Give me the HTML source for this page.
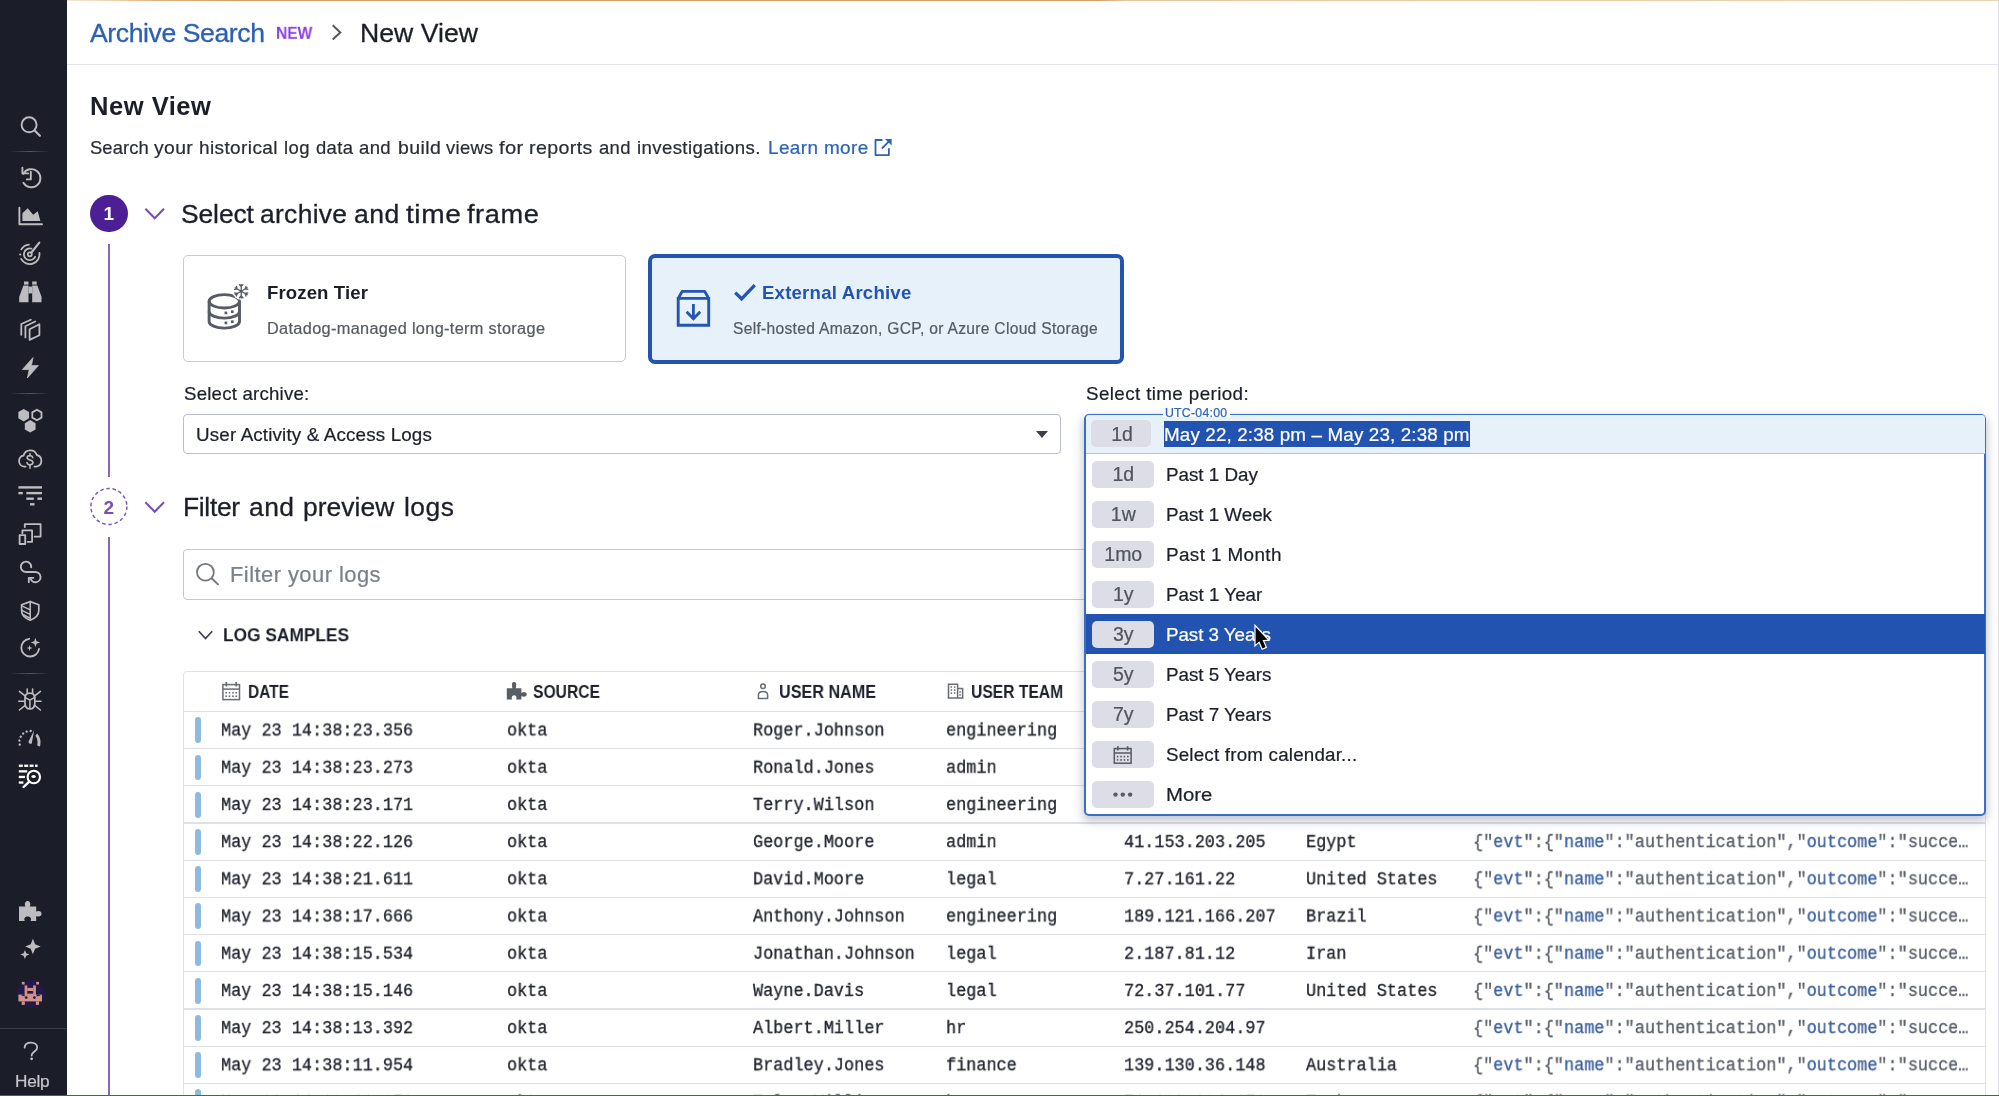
<!DOCTYPE html>
<html><head><meta charset="utf-8"><title>Archive Search</title>
<style>
html,body{margin:0;padding:0;width:1999px;height:1096px;overflow:hidden}
body{width:1999px;height:1096px;position:relative;overflow:hidden;background:#fff;font-family:"Liberation Sans",sans-serif}
.t{position:absolute;white-space:nowrap;margin:0;padding:0;will-change:transform}
.a{position:absolute}
#side{left:0;top:0;width:67px;height:1096px;background:#1b1d29}
#hdrline{left:67px;top:64px;width:1932px;height:1.4px;background:#e1e4ee}
#topline{left:67px;top:0;width:1932px;height:1.2px;background:linear-gradient(90deg,#f3e6d2 0,#f0dcc0 30px,#dfb17c 90px,#d8a163 170px,#d8a163 1030px,#e6c9a3 1060px,#ead2b2 100%)}
#botline{left:0;top:1094.6px;width:1999px;height:1.4px;background:#3d6e44}
#circ1{left:90px;top:194.5px;width:37.5px;height:37.5px;border-radius:50%;background:#4c1f95}
#circ2{display:none}
.vl{position:absolute;left:108.1px;width:2.2px;background:#8768b5}
#card1{left:183px;top:255px;width:440.6px;height:105px;border:1.2px solid #c6cadb;border-radius:5px;background:#fff}
#card2{left:648px;top:254px;width:468px;height:102px;border:4px solid #2354b0;border-radius:7px;background:#e7f1fa}
#sel{left:183px;top:414px;width:876px;height:38px;border:1.2px solid #babecf;border-radius:4px;background:#fff}
#caret{left:1036px;top:431px;width:0;height:0;border-left:6.5px solid transparent;border-right:6.5px solid transparent;border-top:7.5px solid #3c3f48}
#filt{left:183px;top:548.5px;width:1100px;height:49px;border:1.3px solid #c3c7d8;border-radius:4px;background:#fff}
#tbl{left:183.3px;top:671px;width:1801px;height:500px;border:1.3px solid #dfe2ec;border-radius:4px;background:#fff}
#thl{left:184px;top:710.6px;width:1801px;height:1.4px;background:#dfe2ec}
.bar{position:absolute;left:194.5px;width:6.9px;height:25.9px;border-radius:3.45px;background:#8ebbdd}
.rl{position:absolute;left:184px;width:1801px;height:1.3px;background:#dde0ea}
#dd{left:1084px;top:414px;width:898px;height:398px;border:2px solid #3a6fc9;border-radius:5px;background:#fff;box-shadow:0 4px 10px 1px rgba(35,40,65,.27)}
#ddtop{left:1086px;top:415px;width:899px;height:38px;background:#e7f1fa;border-bottom:1.2px solid #b7c4dd;border-radius:3px 3px 0 0}
#ddselbg{left:1163.7px;top:421.3px;width:306px;height:25.4px;background:#2353b0}
#ddhl{left:1086px;top:613.8px;width:899px;height:40.2px;background:#2353b0}
.tag{position:absolute;left:1091.5px;width:62.5px;height:27px;border-radius:5px;background:#dcdde7}
#tag0{}
#utcbg{left:1162.5px;top:411px;width:67.5px;height:6px;background:#fff}
#rstrip{left:1997.6px;top:1.3px;width:1.4px;height:1094px;background:#dedfe4}
b{font-weight:400;color:#2b62b8}
.p{color:#565b66}
#helpline{left:0;top:1027.6px;width:67px;height:1.2px;background:#3a3d4b}
.sd{position:absolute;left:10px;width:40px;height:1.4px;background:linear-gradient(90deg,rgba(90,92,105,0),rgba(90,92,105,.9) 50%,rgba(90,92,105,0))}
svg{position:absolute;overflow:visible}
</style></head><body>
<div id="root" style="position:absolute;left:0;top:0;width:1999px;height:1096px;overflow:hidden">
<div class="a" id="side"></div>
<div class="a" id="topline"></div>
<div class="a" id="hdrline"></div>
<div class="a" id="rstrip"></div>
<div class="vl" style="top:243.5px;height:233px"></div>
<div class="vl" style="top:537px;height:560px"></div>
<div class="a" id="circ1"></div>
<div class="a" id="circ2"></div>
<div class="a" id="card1"></div>
<div class="a" id="card2"></div>
<div class="a" id="sel"></div><div class="a" id="caret"></div>
<div class="a" id="filt"></div>
<div class="a" id="tbl"></div><div class="a" id="thl"></div>
<div class="bar" style="top:717.4px"></div>
<div class="rl" style="top:748.0px"></div>
<div class="bar" style="top:754.6px"></div>
<div class="rl" style="top:785.2px"></div>
<div class="bar" style="top:791.8px"></div>
<div class="rl" style="top:822.4px"></div>
<div class="bar" style="top:829.0px"></div>
<div class="rl" style="top:859.6px"></div>
<div class="bar" style="top:866.2px"></div>
<div class="rl" style="top:896.8px"></div>
<div class="bar" style="top:903.4px"></div>
<div class="rl" style="top:934.0px"></div>
<div class="bar" style="top:940.6px"></div>
<div class="rl" style="top:971.2px"></div>
<div class="bar" style="top:977.8px"></div>
<div class="rl" style="top:1008.4px"></div>
<div class="bar" style="top:1015.0px"></div>
<div class="rl" style="top:1045.6px"></div>
<div class="bar" style="top:1052.2px"></div>
<div class="rl" style="top:1082.8px"></div>
<div class="bar" style="top:1089.4px"></div>
<div class="rl" style="top:1120.0px"></div>
<svg style="left:328px;top:22px" width="16" height="22" viewBox="328 22 16 22"><path d="M332.7 25.3L340.3 32.4L332.7 39.5" fill="none" stroke="#565961" stroke-width="2" stroke-linejoin="miter"/></svg>
<svg style="left:872px;top:136px" width="22" height="22" viewBox="872 136 22 22"><path d="M882.4 140H875.5V155.1H888.9V148.2" fill="none" stroke="#2c62b9" stroke-width="1.8" stroke-linejoin="round"/><path d="M881.9 148.5L890 140.4" fill="none" stroke="#2c62b9" stroke-width="1.8"/><path d="M885 139H891.6V145.6Z" fill="#2c62b9"/></svg>
<svg style="left:142px;top:204px" width="26" height="18" viewBox="142 204 26 18"><path d="M145.4 208.8L154.7 218.2L164 208.8" fill="none" stroke="#7a4db6" stroke-width="2.1"/></svg>
<svg style="left:142px;top:498px" width="26" height="18" viewBox="142 498 26 18"><path d="M145.4 502.3L154.7 511.7L164 502.3" fill="none" stroke="#7a4db6" stroke-width="2.1"/></svg>
<svg style="left:196px;top:628px" width="20" height="14" viewBox="196 628 20 14"><path d="M198.8 631.2L205.5 638.5L212.2 631.2" fill="none" stroke="#3c3f49" stroke-width="1.7"/></svg>
<svg style="left:204px;top:280px" width="48" height="54" viewBox="204 280 48 54"><ellipse cx="224.3" cy="301.3" rx="15.2" ry="6.7" fill="none" stroke="#575b62" stroke-width="2.9"/><path d="M209.10000000000002 301.3V321.4A15.2 6.7 0 0 0 239.5 321.4V301.3" fill="none" stroke="#575b62" stroke-width="2.9"/><path d="M209.10000000000002 311.4A15.2 6.7 0 0 0 239.5 311.4" fill="none" stroke="#575b62" stroke-width="2.9"/><rect x="224.55" y="311.54999999999995" width="2.7" height="2.7" fill="#575b62"/><rect x="230.95000000000002" y="310.34999999999997" width="2.7" height="2.7" fill="#575b62"/><rect x="224.55" y="321.54999999999995" width="2.7" height="2.7" fill="#575b62"/><rect x="230.95000000000002" y="320.34999999999997" width="2.7" height="2.7" fill="#575b62"/><circle cx="241.2" cy="291.2" r="8.6" fill="#fff"/><path d="M241.20 291.20L241.20 284.30M241.20 286.60L239.46 284.67M241.20 286.60L242.94 284.67M241.20 291.20L247.18 287.75M245.18 288.90L245.99 286.43M245.18 288.90L247.73 289.44M241.20 291.20L247.18 294.65M245.18 293.50L247.73 292.96M245.18 293.50L245.99 295.97M241.20 291.20L241.20 298.10M241.20 295.80L242.94 297.73M241.20 295.80L239.46 297.73M241.20 291.20L235.22 294.65M237.22 293.50L236.41 295.97M237.22 293.50L234.67 292.96M241.20 291.20L235.22 287.75M237.22 288.90L234.67 289.44M237.22 288.90L236.41 286.43" fill="none" stroke="#575b62" stroke-width="1.3" stroke-linecap="round"/></svg>
<svg style="left:674px;top:286px" width="40" height="44" viewBox="674 286 40 44"><path d="M678.2 298.4L682.2 291.4H704.7L708.7 298.4" fill="none" stroke="#2356b0" stroke-width="2.9" stroke-linejoin="round"/><path d="M678.2 298.4H708.7V325.2H678.2Z" fill="none" stroke="#2356b0" stroke-width="2.9" stroke-linejoin="miter"/><path d="M693.4 304V318.4M686.6 311.8L693.4 318.8L700.2 311.8" fill="none" stroke="#2356b0" stroke-width="2.8"/></svg>
<svg style="left:731px;top:281px" width="28" height="24" viewBox="731 281 28 24"><path d="M735.2 292.6L741.6 298.8L754.8 285.2" fill="none" stroke="#2356b0" stroke-width="3.3" stroke-linejoin="miter"/></svg>
<svg style="left:194px;top:560px" width="28" height="28" viewBox="194 560 28 28"><circle cx="205.4" cy="572.2" r="8.4" fill="none" stroke="#747880" stroke-width="1.8"/><path d="M211.6 578.2L218 584.4" fill="none" stroke="#747880" stroke-width="2" stroke-linecap="round"/></svg>
<svg style="left:220px;top:680px" width="24" height="24" viewBox="220 680 24 24"><rect x="222.9" y="684.6" width="16.6" height="15" fill="none" stroke="#686c74" stroke-width="1.5"/><path d="M222.9 689.1H239.5" stroke="#686c74" stroke-width="1.5"/><path d="M226.3 682V686.6M236.2 682V686.6" stroke="#686c74" stroke-width="1.7"/><rect x="225.39999999999998" y="692.0" width="1.6" height="1.6" fill="#686c74"/><rect x="228.7" y="692.0" width="1.6" height="1.6" fill="#686c74"/><rect x="232.1" y="692.0" width="1.6" height="1.6" fill="#686c74"/><rect x="235.5" y="692.0" width="1.6" height="1.6" fill="#686c74"/><rect x="225.39999999999998" y="695.4000000000001" width="1.6" height="1.6" fill="#686c74"/><rect x="228.7" y="695.4000000000001" width="1.6" height="1.6" fill="#686c74"/><rect x="232.1" y="695.4000000000001" width="1.6" height="1.6" fill="#686c74"/><rect x="235.5" y="695.4000000000001" width="1.6" height="1.6" fill="#686c74"/></svg>
<svg style="left:504px;top:680px" width="26" height="24" viewBox="504 680 26 24"><path d="M506.8 688.2H512.6C511.4 686.4 512.2 682.2 514.1 682.2C516 682.2 516.8 686.4 515.6 688.2H521.4V692.9C523.2 691.7 526.6 692.4 526.6 694.4C526.6 696.4 523.2 697.1 521.4 695.9V699.6H516C517.2 697.6 516 695.3 514.1 695.3C512.2 695.3 511 697.6 512.2 699.6H506.8Z" fill="#595d64"/><circle cx="514.1" cy="684.2" r="2.1" fill="#595d64"/><circle cx="524.5" cy="694.4" r="2.1" fill="#595d64"/></svg>
<svg style="left:756px;top:682px" width="14" height="20" viewBox="756 682 14 20"><circle cx="763" cy="686.2" r="2.3" fill="none" stroke="#686c74" stroke-width="1.5"/><path d="M758.4 698.6V695.2C758.4 692.8 760 691.6 763 691.6C766 691.6 767.6 692.8 767.6 695.2V698.6Z" fill="none" stroke="#686c74" stroke-width="1.5" stroke-linejoin="round"/></svg>
<svg style="left:946px;top:682px" width="20" height="18" viewBox="946 682 20 18"><path d="M948.5 698V684.2H957.6V698M957.6 688.6H962.6V698M947.6 698H963.6" fill="none" stroke="#686c74" stroke-width="1.5"/><rect x="950.5999999999999" y="686.3" width="1.5" height="1.5" fill="#686c74"/><rect x="953.9" y="686.3" width="1.5" height="1.5" fill="#686c74"/><rect x="950.5999999999999" y="689.3" width="1.5" height="1.5" fill="#686c74"/><rect x="953.9" y="689.3" width="1.5" height="1.5" fill="#686c74"/><rect x="950.5999999999999" y="692.3" width="1.5" height="1.5" fill="#686c74"/><rect x="953.9" y="692.3" width="1.5" height="1.5" fill="#686c74"/><rect x="959.3" y="691.3" width="1.5" height="1.5" fill="#686c74"/><rect x="959.3" y="694.3" width="1.5" height="1.5" fill="#686c74"/></svg>
<svg style="left:88px;top:486px" width="42" height="42" viewBox="88 486 42 42"><circle cx="108.9" cy="506.5" r="18" fill="#fff" stroke="#7f5db6" stroke-width="1.5" stroke-dasharray="3.6 2.68"/></svg>
<div class="a" id="dd"></div>
<div class="a" id="ddtop"></div>
<div class="a" id="ddselbg"></div>
<div class="a" id="ddhl"></div>
<div class="tag" style="top:420px;left:1091px;width:60px;height:27px"></div>
<div class="tag" style="top:461px"></div>
<div class="tag" style="top:501px"></div>
<div class="tag" style="top:541px"></div>
<div class="tag" style="top:581px"></div>
<div class="tag" style="top:621px"></div>
<div class="tag" style="top:661px"></div>
<div class="tag" style="top:701px"></div>
<div class="tag" style="top:741px"></div>
<div class="tag" style="top:781px"></div>
<div class="a" id="utcbg"></div>
<svg style="left:1111px;top:744px" width="24" height="22" viewBox="1111 744 24 22"><rect x="1114.3" y="748.6" width="16.8" height="14.6" fill="none" stroke="#575b63" stroke-width="1.5"/><path d="M1114.3 753H1131.1" stroke="#575b63" stroke-width="1.5"/><path d="M1117.8 746.2V750.6M1127.6 746.2V750.6" stroke="#575b63" stroke-width="1.7"/><rect x="1116.8" y="755.8000000000001" width="1.6" height="1.6" fill="#575b63"/><rect x="1120.2" y="755.8000000000001" width="1.6" height="1.6" fill="#575b63"/><rect x="1123.6000000000001" y="755.8000000000001" width="1.6" height="1.6" fill="#575b63"/><rect x="1127.0" y="755.8000000000001" width="1.6" height="1.6" fill="#575b63"/><rect x="1116.8" y="759.1" width="1.6" height="1.6" fill="#575b63"/><rect x="1120.2" y="759.1" width="1.6" height="1.6" fill="#575b63"/><rect x="1123.6000000000001" y="759.1" width="1.6" height="1.6" fill="#575b63"/><rect x="1127.0" y="759.1" width="1.6" height="1.6" fill="#575b63"/></svg>
<svg style="left:1110px;top:790px" width="26" height="10" viewBox="1110 790 26 10"><circle cx="1115.5" cy="794.6" r="2.2" fill="#575b63"/><circle cx="1122.8" cy="794.6" r="2.2" fill="#575b63"/><circle cx="1130.1" cy="794.6" r="2.2" fill="#575b63"/></svg>
<div id="help" class="t" style="left:14.5px;top:1070px;font:400 17.2px/22px 'Liberation Sans', sans-serif;color:#c4c5cc;letter-spacing:-0.225px;-webkit-text-stroke:0.22px #c4c5cc;transform:translateY(0.10px);transform-origin:0 0;">Help</div>
<div id="h_as" class="t" style="left:89.5px;top:16px;font:400 26.6px/35px 'Liberation Sans', sans-serif;color:#2c60b6;letter-spacing:-0.414px;-webkit-text-stroke:0.3px #2c60b6;">Archive Search</div>
<div id="h_new" class="t" style="left:275.6px;top:22px;font:700 16.3px/21px 'Liberation Sans', sans-serif;color:#8a40de;letter-spacing:0.000px;transform:translateY(0.80px) scaleX(0.9579);transform-origin:0 0;">NEW</div>
<div id="h_nv" class="t" style="left:360px;top:16px;font:400 26.6px/35px 'Liberation Sans', sans-serif;color:#1c1f2a;letter-spacing:0.025px;-webkit-text-stroke:0.3px #1c1f2a;">New View</div>
<div id="t_nv" class="t" style="left:90px;top:90px;font:700 25.4px/33px 'Liberation Sans', sans-serif;color:#1c1f2a;letter-spacing:0.508px;transform:translateY(0.20px) scaleX(1.0061);transform-origin:0 0;">New View</div>
<div id="t_desc_0" class="t" style="left:90.27px;top:136px;font:400 18.4px/24px 'Liberation Sans', sans-serif;color:#2a2d37;letter-spacing:0.077px;-webkit-text-stroke:0.22px #2a2d37;transform:translateY(0.20px);transform-origin:0 0;">Search</div>
<div id="t_desc_1" class="t" style="left:154.07px;top:136px;font:400 18.4px/24px 'Liberation Sans', sans-serif;color:#2a2d37;letter-spacing:0.368px;-webkit-text-stroke:0.22px #2a2d37;transform:translateY(0.20px) scaleX(1.0508);transform-origin:0 0;">your</div>
<div id="t_desc_2" class="t" style="left:199.47px;top:136px;font:400 18.4px/24px 'Liberation Sans', sans-serif;color:#2a2d37;letter-spacing:0.368px;-webkit-text-stroke:0.22px #2a2d37;transform:translateY(0.20px) scaleX(1.0339);transform-origin:0 0;">historical</div>
<div id="t_desc_3" class="t" style="left:283.87px;top:136px;font:400 18.4px/24px 'Liberation Sans', sans-serif;color:#2a2d37;letter-spacing:0.368px;-webkit-text-stroke:0.22px #2a2d37;transform:translateY(0.20px) scaleX(1.0061);transform-origin:0 0;">log</div>
<div id="t_desc_4" class="t" style="left:315.67px;top:136px;font:400 18.4px/24px 'Liberation Sans', sans-serif;color:#2a2d37;letter-spacing:0.368px;-webkit-text-stroke:0.22px #2a2d37;transform:translateY(0.20px) scaleX(1.0024);transform-origin:0 0;">data</div>
<div id="t_desc_5" class="t" style="left:359.37px;top:136px;font:400 18.4px/24px 'Liberation Sans', sans-serif;color:#2a2d37;letter-spacing:0.368px;-webkit-text-stroke:0.22px #2a2d37;transform:translateY(0.20px) scaleX(1.0081);transform-origin:0 0;">and</div>
<div id="t_desc_6" class="t" style="left:397.97px;top:136px;font:400 18.4px/24px 'Liberation Sans', sans-serif;color:#2a2d37;letter-spacing:0.368px;-webkit-text-stroke:0.22px #2a2d37;transform:translateY(0.20px) scaleX(1.0595);transform-origin:0 0;">build</div>
<div id="t_desc_7" class="t" style="left:446.17px;top:136px;font:400 18.4px/24px 'Liberation Sans', sans-serif;color:#2a2d37;letter-spacing:0.312px;-webkit-text-stroke:0.22px #2a2d37;transform:translateY(0.20px);transform-origin:0 0;">views</div>
<div id="t_desc_8" class="t" style="left:498.87px;top:136px;font:400 18.4px/24px 'Liberation Sans', sans-serif;color:#2a2d37;letter-spacing:0.368px;-webkit-text-stroke:0.22px #2a2d37;transform:translateY(0.20px) scaleX(1.0958);transform-origin:0 0;">for</div>
<div id="t_desc_9" class="t" style="left:529.47px;top:136px;font:400 18.4px/24px 'Liberation Sans', sans-serif;color:#2a2d37;letter-spacing:0.368px;-webkit-text-stroke:0.22px #2a2d37;transform:translateY(0.20px) scaleX(1.0666);transform-origin:0 0;">reports</div>
<div id="t_desc_10" class="t" style="left:598.77px;top:136px;font:400 18.4px/24px 'Liberation Sans', sans-serif;color:#2a2d37;letter-spacing:0.368px;-webkit-text-stroke:0.22px #2a2d37;transform:translateY(0.20px) scaleX(1.0018);transform-origin:0 0;">and</div>
<div id="t_desc_11" class="t" style="left:637.17px;top:136px;font:400 18.4px/24px 'Liberation Sans', sans-serif;color:#2a2d37;letter-spacing:0.368px;-webkit-text-stroke:0.22px #2a2d37;transform:translateY(0.20px) scaleX(1.0134);transform-origin:0 0;">investigations.</div>
<div id="t_lm" class="t" style="left:768px;top:136px;font:400 18.4px/24px 'Liberation Sans', sans-serif;color:#2d64bb;letter-spacing:0.368px;-webkit-text-stroke:0.22px #2d64bb;transform:translateY(0.20px) scaleX(1.0289);transform-origin:0 0;">Learn more</div>
<div id="s1_n" class="t" style="left:0px;font:700 19px/25px 'Liberation Sans', sans-serif;color:#fff;letter-spacing:0.000px;left:90px;width:37.5px;text-align:center;top:201px;">1</div>
<div id="s1_h_0" class="t" style="left:181.31px;top:197px;font:400 26.4px/34px 'Liberation Sans', sans-serif;color:#1c1f2a;letter-spacing:-0.087px;-webkit-text-stroke:0.3px #1c1f2a;transform:translateY(0.20px);transform-origin:0 0;">Select</div>
<div id="s1_h_1" class="t" style="left:259.81px;top:197px;font:400 26.4px/34px 'Liberation Sans', sans-serif;color:#1c1f2a;letter-spacing:0.326px;-webkit-text-stroke:0.3px #1c1f2a;transform:translateY(0.20px);transform-origin:0 0;">archive</div>
<div id="s1_h_2" class="t" style="left:353.81px;top:197px;font:400 26.4px/34px 'Liberation Sans', sans-serif;color:#1c1f2a;letter-spacing:0.528px;-webkit-text-stroke:0.3px #1c1f2a;transform:translateY(0.20px) scaleX(1.0065);transform-origin:0 0;">and</div>
<div id="s1_h_3" class="t" style="left:405.81px;top:197px;font:400 26.4px/34px 'Liberation Sans', sans-serif;color:#1c1f2a;letter-spacing:0.528px;-webkit-text-stroke:0.3px #1c1f2a;transform:translateY(0.20px) scaleX(1.0648);transform-origin:0 0;">time</div>
<div id="s1_h_4" class="t" style="left:467.31px;top:197px;font:400 26.4px/34px 'Liberation Sans', sans-serif;color:#1c1f2a;letter-spacing:0.528px;-webkit-text-stroke:0.3px #1c1f2a;transform:translateY(0.20px) scaleX(1.0319);transform-origin:0 0;">frame</div>
<div id="c1_t" class="t" style="left:267px;top:281px;font:700 18.6px/24px 'Liberation Sans', sans-serif;color:#1c1f2a;letter-spacing:0.100px;transform:translateY(0.10px);transform-origin:0 0;">Frozen Tier</div>
<div id="c1_s" class="t" style="left:266.5px;top:318px;font:400 15.6px/20px 'Liberation Sans', sans-serif;color:#565b63;letter-spacing:0.312px;-webkit-text-stroke:0.22px #565b63;transform:translateY(0.90px) scaleX(1.0463);transform-origin:0 0;">Datadog-managed long-term storage</div>
<div id="c2_t" class="t" style="left:761.5px;top:281px;font:700 18.6px/24px 'Liberation Sans', sans-serif;color:#2353b0;letter-spacing:0.212px;transform:translateY(0.10px);transform-origin:0 0;">External Archive</div>
<div id="c2_s" class="t" style="left:733px;top:318px;font:400 15.6px/20px 'Liberation Sans', sans-serif;color:#565b63;letter-spacing:0.302px;-webkit-text-stroke:0.22px #565b63;transform:translateY(0.90px);transform-origin:0 0;">Self-hosted Amazon, GCP, or Azure Cloud Storage</div>
<div id="l_sa" class="t" style="left:183.5px;top:382px;font:400 18.6px/24px 'Liberation Sans', sans-serif;color:#1c1f2a;letter-spacing:0.233px;-webkit-text-stroke:0.22px #1c1f2a;transform:translateY(0.10px);transform-origin:0 0;">Select archive:</div>
<div id="v_sa" class="t" style="left:195.5px;top:423px;font:400 18.8px/24px 'Liberation Sans', sans-serif;color:#1c1f2a;letter-spacing:0.159px;-webkit-text-stroke:0.22px #1c1f2a;transform:translateY(0.10px);transform-origin:0 0;">User Activity &amp; Access Logs</div>
<div id="l_tp" class="t" style="left:1085.5px;top:382px;font:400 18.6px/24px 'Liberation Sans', sans-serif;color:#1c1f2a;letter-spacing:0.372px;-webkit-text-stroke:0.22px #1c1f2a;transform:translateY(0.10px) scaleX(1.0120);transform-origin:0 0;">Select time period:</div>
<div id="utc" class="t" style="left:1165px;top:404px;font:400 12.2px/16px 'Liberation Sans', sans-serif;color:#2d64bb;letter-spacing:0.244px;-webkit-text-stroke:0.22px #2d64bb;transform:translateY(0.50px) scaleX(1.0082);transform-origin:0 0;">UTC-04:00</div>
<div id="s2_n" class="t" style="left:0px;font:700 19px/25px 'Liberation Sans', sans-serif;color:#7851b2;letter-spacing:0.000px;left:90.2px;width:37.5px;text-align:center;top:494.5px;">2</div>
<div id="s2_h_0" class="t" style="left:183.11px;top:490px;font:400 26.4px/34px 'Liberation Sans', sans-serif;color:#1c1f2a;letter-spacing:-0.320px;-webkit-text-stroke:0.3px #1c1f2a;transform:translateY(0.30px);transform-origin:0 0;">Filter</div>
<div id="s2_h_1" class="t" style="left:249.41px;top:490px;font:400 26.4px/34px 'Liberation Sans', sans-serif;color:#1c1f2a;letter-spacing:0.493px;-webkit-text-stroke:0.3px #1c1f2a;transform:translateY(0.30px);transform-origin:0 0;">and</div>
<div id="s2_h_2" class="t" style="left:303.11px;top:490px;font:400 26.4px/34px 'Liberation Sans', sans-serif;color:#1c1f2a;letter-spacing:0.069px;-webkit-text-stroke:0.3px #1c1f2a;transform:translateY(0.30px);transform-origin:0 0;">preview</div>
<div id="s2_h_3" class="t" style="left:403.71px;top:490px;font:400 26.4px/34px 'Liberation Sans', sans-serif;color:#1c1f2a;letter-spacing:0.495px;-webkit-text-stroke:0.3px #1c1f2a;transform:translateY(0.30px);transform-origin:0 0;">logs</div>
<div id="ph" class="t" style="left:229.5px;top:561px;font:400 21.4px/28px 'Liberation Sans', sans-serif;color:#7b8089;letter-spacing:0.428px;-webkit-text-stroke:0.22px #7b8089;transform:translateY(0.30px) scaleX(1.0262);transform-origin:0 0;">Filter your logs</div>
<div id="logs" class="t" style="left:222.5px;top:622px;font:700 18.9px/25px 'Liberation Sans', sans-serif;color:#1c1f2a;letter-spacing:0.000px;transform:translateY(0.20px) scaleX(0.9164);transform-origin:0 0;">LOG SAMPLES</div>
<div id="dd_sel" class="t" style="left:1164.3px;top:423px;font:400 18.8px/24px 'Liberation Sans', sans-serif;color:#fff;letter-spacing:0.152px;-webkit-text-stroke:0.22px #fff;transform:translateY(0.10px);transform-origin:0 0;">May 22, 2:38 pm – May 23, 2:38 pm</div>
<div id="tag0" class="t" style="left:0px;top:422px;font:400 19.5px/25px 'Liberation Sans', sans-serif;color:#50555d;letter-spacing:0.000px;left:1091.5px;width:60px;text-align:center;-webkit-text-stroke:0.22px #50555d;">1d</div>
<div id="ddl0" class="t" style="left:1165.6px;top:462px;font:400 18.8px/24px 'Liberation Sans', sans-serif;color:#1c1f2a;letter-spacing:0.000px;-webkit-text-stroke:0.22px #1c1f2a;transform:translateY(0.70px);transform-origin:0 0;">Past 1 Day</div>
<div id="ddt0" class="t" style="left:0px;top:462px;font:400 19.5px/25px 'Liberation Sans', sans-serif;color:#50555d;letter-spacing:0.000px;left:1091.5px;width:62.5px;text-align:center;-webkit-text-stroke:0.22px #50555d;">1d</div>
<div id="ddl1" class="t" style="left:1165.6px;top:502px;font:400 18.8px/24px 'Liberation Sans', sans-serif;color:#1c1f2a;letter-spacing:-0.018px;-webkit-text-stroke:0.22px #1c1f2a;transform:translateY(0.70px);transform-origin:0 0;">Past 1 Week</div>
<div id="ddt1" class="t" style="left:0px;top:502px;font:400 19.5px/25px 'Liberation Sans', sans-serif;color:#50555d;letter-spacing:0.000px;left:1091.5px;width:62.5px;text-align:center;-webkit-text-stroke:0.22px #50555d;">1w</div>
<div id="ddl2" class="t" style="left:1165.6px;top:542px;font:400 18.8px/24px 'Liberation Sans', sans-serif;color:#1c1f2a;letter-spacing:0.376px;-webkit-text-stroke:0.22px #1c1f2a;transform:translateY(0.70px) scaleX(1.0060);transform-origin:0 0;">Past 1 Month</div>
<div id="ddt2" class="t" style="left:0px;top:542px;font:400 19.5px/25px 'Liberation Sans', sans-serif;color:#50555d;letter-spacing:0.000px;left:1091.5px;width:62.5px;text-align:center;-webkit-text-stroke:0.22px #50555d;">1mo</div>
<div id="ddl3" class="t" style="left:1165.6px;top:582px;font:400 18.8px/24px 'Liberation Sans', sans-serif;color:#1c1f2a;letter-spacing:0.027px;-webkit-text-stroke:0.22px #1c1f2a;transform:translateY(0.70px);transform-origin:0 0;">Past 1 Year</div>
<div id="ddt3" class="t" style="left:0px;top:582px;font:400 19.5px/25px 'Liberation Sans', sans-serif;color:#50555d;letter-spacing:0.000px;left:1091.5px;width:62.5px;text-align:center;-webkit-text-stroke:0.22px #50555d;">1y</div>
<div id="ddl4" class="t" style="left:1165.6px;top:622px;font:400 18.8px/24px 'Liberation Sans', sans-serif;color:#fff;letter-spacing:-0.050px;-webkit-text-stroke:0.22px #fff;transform:translateY(0.70px);transform-origin:0 0;">Past 3 Years</div>
<div id="ddt4" class="t" style="left:0px;top:622px;font:400 19.5px/25px 'Liberation Sans', sans-serif;color:#50555d;letter-spacing:0.000px;left:1091.5px;width:62.5px;text-align:center;-webkit-text-stroke:0.22px #50555d;">3y</div>
<div id="ddl5" class="t" style="left:1165.6px;top:662px;font:400 18.8px/24px 'Liberation Sans', sans-serif;color:#1c1f2a;letter-spacing:-0.008px;-webkit-text-stroke:0.22px #1c1f2a;transform:translateY(0.70px);transform-origin:0 0;">Past 5 Years</div>
<div id="ddt5" class="t" style="left:0px;top:662px;font:400 19.5px/25px 'Liberation Sans', sans-serif;color:#50555d;letter-spacing:0.000px;left:1091.5px;width:62.5px;text-align:center;-webkit-text-stroke:0.22px #50555d;">5y</div>
<div id="ddl6" class="t" style="left:1165.6px;top:702px;font:400 18.8px/24px 'Liberation Sans', sans-serif;color:#1c1f2a;letter-spacing:-0.008px;-webkit-text-stroke:0.22px #1c1f2a;transform:translateY(0.70px);transform-origin:0 0;">Past 7 Years</div>
<div id="ddt6" class="t" style="left:0px;top:702px;font:400 19.5px/25px 'Liberation Sans', sans-serif;color:#50555d;letter-spacing:0.000px;left:1091.5px;width:62.5px;text-align:center;-webkit-text-stroke:0.22px #50555d;">7y</div>
<div id="ddl7" class="t" style="left:1165.6px;top:742px;font:400 18.8px/24px 'Liberation Sans', sans-serif;color:#1c1f2a;letter-spacing:0.196px;-webkit-text-stroke:0.22px #1c1f2a;transform:translateY(0.70px);transform-origin:0 0;">Select from calendar...</div>
<div id="ddl8" class="t" style="left:1165.6px;top:782px;font:400 18.8px/24px 'Liberation Sans', sans-serif;color:#1c1f2a;letter-spacing:0.000px;-webkit-text-stroke:0.22px #1c1f2a;transform:translateY(0.70px) scaleX(1.0841);transform-origin:0 0;">More</div>
<div id="th0" class="t" style="left:247.5px;top:680px;font:700 17.5px/23px 'Liberation Sans', sans-serif;color:#1c1f2a;letter-spacing:0.000px;transform:translateY(0.90px) scaleX(0.8812);transform-origin:0 0;">DATE</div>
<div id="th1" class="t" style="left:532.5px;top:680px;font:700 17.5px/23px 'Liberation Sans', sans-serif;color:#1c1f2a;letter-spacing:0.000px;transform:translateY(0.90px) scaleX(0.8945);transform-origin:0 0;">SOURCE</div>
<div id="th2" class="t" style="left:778.5px;top:680px;font:700 17.5px/23px 'Liberation Sans', sans-serif;color:#1c1f2a;letter-spacing:0.000px;transform:translateY(0.90px) scaleX(0.9248);transform-origin:0 0;">USER NAME</div>
<div id="th3" class="t" style="left:970.8px;top:680px;font:700 17.5px/23px 'Liberation Sans', sans-serif;color:#1c1f2a;letter-spacing:0.000px;transform:translateY(0.90px) scaleX(0.8943);transform-origin:0 0;">USER TEAM</div>
<div id="r0d" class="t" style="left:220.7px;top:719px;font:400 17.8px/23px 'Liberation Mono', monospace;color:#20232d;letter-spacing:0.000px;-webkit-text-stroke:0.3px #20232d;transform:translateY(0.50px) scaleX(0.9477);transform-origin:0 0;">May 23 14:38:23.356</div>
<div id="r0s" class="t" style="left:506.7px;top:719px;font:400 17.8px/23px 'Liberation Mono', monospace;color:#20232d;letter-spacing:0.000px;-webkit-text-stroke:0.3px #20232d;transform:translateY(0.50px) scaleX(0.9471);transform-origin:0 0;">okta</div>
<div id="r0u" class="t" style="left:752.7px;top:719px;font:400 17.8px/23px 'Liberation Mono', monospace;color:#20232d;letter-spacing:0.000px;-webkit-text-stroke:0.3px #20232d;transform:translateY(0.50px) scaleX(0.9476);transform-origin:0 0;">Roger.Johnson</div>
<div id="r0t" class="t" style="left:945.7px;top:719px;font:400 17.8px/23px 'Liberation Mono', monospace;color:#20232d;letter-spacing:0.000px;-webkit-text-stroke:0.3px #20232d;transform:translateY(0.50px) scaleX(0.9473);transform-origin:0 0;">engineering</div>
<div id="r1d" class="t" style="left:220.7px;top:756px;font:400 17.8px/23px 'Liberation Mono', monospace;color:#20232d;letter-spacing:0.000px;-webkit-text-stroke:0.3px #20232d;transform:translateY(0.70px) scaleX(0.9477);transform-origin:0 0;">May 23 14:38:23.273</div>
<div id="r1s" class="t" style="left:506.7px;top:756px;font:400 17.8px/23px 'Liberation Mono', monospace;color:#20232d;letter-spacing:0.000px;-webkit-text-stroke:0.3px #20232d;transform:translateY(0.70px) scaleX(0.9471);transform-origin:0 0;">okta</div>
<div id="r1u" class="t" style="left:752.7px;top:756px;font:400 17.8px/23px 'Liberation Mono', monospace;color:#20232d;letter-spacing:0.000px;-webkit-text-stroke:0.3px #20232d;transform:translateY(0.70px) scaleX(0.9478);transform-origin:0 0;">Ronald.Jones</div>
<div id="r1t" class="t" style="left:945.7px;top:756px;font:400 17.8px/23px 'Liberation Mono', monospace;color:#20232d;letter-spacing:0.000px;-webkit-text-stroke:0.3px #20232d;transform:translateY(0.70px) scaleX(0.9484);transform-origin:0 0;">admin</div>
<div id="r2d" class="t" style="left:220.7px;top:793px;font:400 17.8px/23px 'Liberation Mono', monospace;color:#20232d;letter-spacing:0.000px;-webkit-text-stroke:0.3px #20232d;transform:translateY(0.90px) scaleX(0.9477);transform-origin:0 0;">May 23 14:38:23.171</div>
<div id="r2s" class="t" style="left:506.7px;top:793px;font:400 17.8px/23px 'Liberation Mono', monospace;color:#20232d;letter-spacing:0.000px;-webkit-text-stroke:0.3px #20232d;transform:translateY(0.90px) scaleX(0.9471);transform-origin:0 0;">okta</div>
<div id="r2u" class="t" style="left:752.7px;top:793px;font:400 17.8px/23px 'Liberation Mono', monospace;color:#20232d;letter-spacing:0.000px;-webkit-text-stroke:0.3px #20232d;transform:translateY(0.90px) scaleX(0.9478);transform-origin:0 0;">Terry.Wilson</div>
<div id="r2t" class="t" style="left:945.7px;top:793px;font:400 17.8px/23px 'Liberation Mono', monospace;color:#20232d;letter-spacing:0.000px;-webkit-text-stroke:0.3px #20232d;transform:translateY(0.90px) scaleX(0.9473);transform-origin:0 0;">engineering</div>
<div id="r3d" class="t" style="left:220.7px;top:831px;font:400 17.8px/23px 'Liberation Mono', monospace;color:#20232d;letter-spacing:0.000px;-webkit-text-stroke:0.3px #20232d;transform:translateY(0.10px) scaleX(0.9477);transform-origin:0 0;">May 23 14:38:22.126</div>
<div id="r3s" class="t" style="left:506.7px;top:831px;font:400 17.8px/23px 'Liberation Mono', monospace;color:#20232d;letter-spacing:0.000px;-webkit-text-stroke:0.3px #20232d;transform:translateY(0.10px) scaleX(0.9471);transform-origin:0 0;">okta</div>
<div id="r3u" class="t" style="left:752.7px;top:831px;font:400 17.8px/23px 'Liberation Mono', monospace;color:#20232d;letter-spacing:0.000px;-webkit-text-stroke:0.3px #20232d;transform:translateY(0.10px) scaleX(0.9478);transform-origin:0 0;">George.Moore</div>
<div id="r3t" class="t" style="left:945.7px;top:831px;font:400 17.8px/23px 'Liberation Mono', monospace;color:#20232d;letter-spacing:0.000px;-webkit-text-stroke:0.3px #20232d;transform:translateY(0.10px) scaleX(0.9484);transform-origin:0 0;">admin</div>
<div id="r3i" class="t" style="left:1123.5px;top:831px;font:400 17.8px/23px 'Liberation Mono', monospace;color:#20232d;letter-spacing:0.000px;-webkit-text-stroke:0.3px #20232d;transform:translateY(0.10px) scaleX(0.9474);transform-origin:0 0;">41.153.203.205</div>
<div id="r3c" class="t" style="left:1305.5px;top:831px;font:400 17.8px/23px 'Liberation Mono', monospace;color:#20232d;letter-spacing:0.000px;-webkit-text-stroke:0.3px #20232d;transform:translateY(0.10px) scaleX(0.9466);transform-origin:0 0;">Egypt</div>
<div id="r3j" class="t" style="left:1473.3px;top:831px;font:400 17.8px/23px 'Liberation Mono', monospace;color:#565b66;letter-spacing:0.000px;-webkit-text-stroke:0.3px #565b66;transform:translateY(0.10px) scaleX(0.9474);transform-origin:0 0;"><span class="p">{"</span><b>evt</b><span class="p">":{"</span><b>name</b><span class="p">":"</span>authentication<span class="p">","</span><b>outcome</b><span class="p">":"</span>succe…</div>
<div id="r4d" class="t" style="left:220.7px;top:868px;font:400 17.8px/23px 'Liberation Mono', monospace;color:#20232d;letter-spacing:0.000px;-webkit-text-stroke:0.3px #20232d;transform:translateY(0.30px) scaleX(0.9477);transform-origin:0 0;">May 23 14:38:21.611</div>
<div id="r4s" class="t" style="left:506.7px;top:868px;font:400 17.8px/23px 'Liberation Mono', monospace;color:#20232d;letter-spacing:0.000px;-webkit-text-stroke:0.3px #20232d;transform:translateY(0.30px) scaleX(0.9471);transform-origin:0 0;">okta</div>
<div id="r4u" class="t" style="left:752.7px;top:868px;font:400 17.8px/23px 'Liberation Mono', monospace;color:#20232d;letter-spacing:0.000px;-webkit-text-stroke:0.3px #20232d;transform:translateY(0.30px) scaleX(0.9473);transform-origin:0 0;">David.Moore</div>
<div id="r4t" class="t" style="left:945.7px;top:868px;font:400 17.8px/23px 'Liberation Mono', monospace;color:#20232d;letter-spacing:0.000px;-webkit-text-stroke:0.3px #20232d;transform:translateY(0.30px) scaleX(0.9484);transform-origin:0 0;">legal</div>
<div id="r4i" class="t" style="left:1123.5px;top:868px;font:400 17.8px/23px 'Liberation Mono', monospace;color:#20232d;letter-spacing:0.000px;-webkit-text-stroke:0.3px #20232d;transform:translateY(0.30px) scaleX(0.9473);transform-origin:0 0;">7.27.161.22</div>
<div id="r4c" class="t" style="left:1305.5px;top:868px;font:400 17.8px/23px 'Liberation Mono', monospace;color:#20232d;letter-spacing:0.000px;-webkit-text-stroke:0.3px #20232d;transform:translateY(0.30px) scaleX(0.9476);transform-origin:0 0;">United States</div>
<div id="r4j" class="t" style="left:1473.3px;top:868px;font:400 17.8px/23px 'Liberation Mono', monospace;color:#565b66;letter-spacing:0.000px;-webkit-text-stroke:0.3px #565b66;transform:translateY(0.30px) scaleX(0.9474);transform-origin:0 0;"><span class="p">{"</span><b>evt</b><span class="p">":{"</span><b>name</b><span class="p">":"</span>authentication<span class="p">","</span><b>outcome</b><span class="p">":"</span>succe…</div>
<div id="r5d" class="t" style="left:220.7px;top:905px;font:400 17.8px/23px 'Liberation Mono', monospace;color:#20232d;letter-spacing:0.000px;-webkit-text-stroke:0.3px #20232d;transform:translateY(0.50px) scaleX(0.9477);transform-origin:0 0;">May 23 14:38:17.666</div>
<div id="r5s" class="t" style="left:506.7px;top:905px;font:400 17.8px/23px 'Liberation Mono', monospace;color:#20232d;letter-spacing:0.000px;-webkit-text-stroke:0.3px #20232d;transform:translateY(0.50px) scaleX(0.9471);transform-origin:0 0;">okta</div>
<div id="r5u" class="t" style="left:752.7px;top:905px;font:400 17.8px/23px 'Liberation Mono', monospace;color:#20232d;letter-spacing:0.000px;-webkit-text-stroke:0.3px #20232d;transform:translateY(0.50px) scaleX(0.9472);transform-origin:0 0;">Anthony.Johnson</div>
<div id="r5t" class="t" style="left:945.7px;top:905px;font:400 17.8px/23px 'Liberation Mono', monospace;color:#20232d;letter-spacing:0.000px;-webkit-text-stroke:0.3px #20232d;transform:translateY(0.50px) scaleX(0.9473);transform-origin:0 0;">engineering</div>
<div id="r5i" class="t" style="left:1123.5px;top:905px;font:400 17.8px/23px 'Liberation Mono', monospace;color:#20232d;letter-spacing:0.000px;-webkit-text-stroke:0.3px #20232d;transform:translateY(0.50px) scaleX(0.9472);transform-origin:0 0;">189.121.166.207</div>
<div id="r5c" class="t" style="left:1305.5px;top:905px;font:400 17.8px/23px 'Liberation Mono', monospace;color:#20232d;letter-spacing:0.000px;-webkit-text-stroke:0.3px #20232d;transform:translateY(0.50px) scaleX(0.9478);transform-origin:0 0;">Brazil</div>
<div id="r5j" class="t" style="left:1473.3px;top:905px;font:400 17.8px/23px 'Liberation Mono', monospace;color:#565b66;letter-spacing:0.000px;-webkit-text-stroke:0.3px #565b66;transform:translateY(0.50px) scaleX(0.9474);transform-origin:0 0;"><span class="p">{"</span><b>evt</b><span class="p">":{"</span><b>name</b><span class="p">":"</span>authentication<span class="p">","</span><b>outcome</b><span class="p">":"</span>succe…</div>
<div id="r6d" class="t" style="left:220.7px;top:942px;font:400 17.8px/23px 'Liberation Mono', monospace;color:#20232d;letter-spacing:0.000px;-webkit-text-stroke:0.3px #20232d;transform:translateY(0.70px) scaleX(0.9477);transform-origin:0 0;">May 23 14:38:15.534</div>
<div id="r6s" class="t" style="left:506.7px;top:942px;font:400 17.8px/23px 'Liberation Mono', monospace;color:#20232d;letter-spacing:0.000px;-webkit-text-stroke:0.3px #20232d;transform:translateY(0.70px) scaleX(0.9471);transform-origin:0 0;">okta</div>
<div id="r6u" class="t" style="left:752.7px;top:942px;font:400 17.8px/23px 'Liberation Mono', monospace;color:#20232d;letter-spacing:0.000px;-webkit-text-stroke:0.3px #20232d;transform:translateY(0.70px) scaleX(0.9476);transform-origin:0 0;">Jonathan.Johnson</div>
<div id="r6t" class="t" style="left:945.7px;top:942px;font:400 17.8px/23px 'Liberation Mono', monospace;color:#20232d;letter-spacing:0.000px;-webkit-text-stroke:0.3px #20232d;transform:translateY(0.70px) scaleX(0.9484);transform-origin:0 0;">legal</div>
<div id="r6i" class="t" style="left:1123.5px;top:942px;font:400 17.8px/23px 'Liberation Mono', monospace;color:#20232d;letter-spacing:0.000px;-webkit-text-stroke:0.3px #20232d;transform:translateY(0.70px) scaleX(0.9473);transform-origin:0 0;">2.187.81.12</div>
<div id="r6c" class="t" style="left:1305.5px;top:942px;font:400 17.8px/23px 'Liberation Mono', monospace;color:#20232d;letter-spacing:0.000px;-webkit-text-stroke:0.3px #20232d;transform:translateY(0.70px) scaleX(0.9471);transform-origin:0 0;">Iran</div>
<div id="r6j" class="t" style="left:1473.3px;top:942px;font:400 17.8px/23px 'Liberation Mono', monospace;color:#565b66;letter-spacing:0.000px;-webkit-text-stroke:0.3px #565b66;transform:translateY(0.70px) scaleX(0.9474);transform-origin:0 0;"><span class="p">{"</span><b>evt</b><span class="p">":{"</span><b>name</b><span class="p">":"</span>authentication<span class="p">","</span><b>outcome</b><span class="p">":"</span>succe…</div>
<div id="r7d" class="t" style="left:220.7px;top:979px;font:400 17.8px/23px 'Liberation Mono', monospace;color:#20232d;letter-spacing:0.000px;-webkit-text-stroke:0.3px #20232d;transform:translateY(0.90px) scaleX(0.9477);transform-origin:0 0;">May 23 14:38:15.146</div>
<div id="r7s" class="t" style="left:506.7px;top:979px;font:400 17.8px/23px 'Liberation Mono', monospace;color:#20232d;letter-spacing:0.000px;-webkit-text-stroke:0.3px #20232d;transform:translateY(0.90px) scaleX(0.9471);transform-origin:0 0;">okta</div>
<div id="r7u" class="t" style="left:752.7px;top:979px;font:400 17.8px/23px 'Liberation Mono', monospace;color:#20232d;letter-spacing:0.000px;-webkit-text-stroke:0.3px #20232d;transform:translateY(0.90px) scaleX(0.9473);transform-origin:0 0;">Wayne.Davis</div>
<div id="r7t" class="t" style="left:945.7px;top:979px;font:400 17.8px/23px 'Liberation Mono', monospace;color:#20232d;letter-spacing:0.000px;-webkit-text-stroke:0.3px #20232d;transform:translateY(0.90px) scaleX(0.9484);transform-origin:0 0;">legal</div>
<div id="r7i" class="t" style="left:1123.5px;top:979px;font:400 17.8px/23px 'Liberation Mono', monospace;color:#20232d;letter-spacing:0.000px;-webkit-text-stroke:0.3px #20232d;transform:translateY(0.90px) scaleX(0.9478);transform-origin:0 0;">72.37.101.77</div>
<div id="r7c" class="t" style="left:1305.5px;top:979px;font:400 17.8px/23px 'Liberation Mono', monospace;color:#20232d;letter-spacing:0.000px;-webkit-text-stroke:0.3px #20232d;transform:translateY(0.90px) scaleX(0.9476);transform-origin:0 0;">United States</div>
<div id="r7j" class="t" style="left:1473.3px;top:979px;font:400 17.8px/23px 'Liberation Mono', monospace;color:#565b66;letter-spacing:0.000px;-webkit-text-stroke:0.3px #565b66;transform:translateY(0.90px) scaleX(0.9474);transform-origin:0 0;"><span class="p">{"</span><b>evt</b><span class="p">":{"</span><b>name</b><span class="p">":"</span>authentication<span class="p">","</span><b>outcome</b><span class="p">":"</span>succe…</div>
<div id="r8d" class="t" style="left:220.7px;top:1017px;font:400 17.8px/23px 'Liberation Mono', monospace;color:#20232d;letter-spacing:0.000px;-webkit-text-stroke:0.3px #20232d;transform:translateY(0.10px) scaleX(0.9477);transform-origin:0 0;">May 23 14:38:13.392</div>
<div id="r8s" class="t" style="left:506.7px;top:1017px;font:400 17.8px/23px 'Liberation Mono', monospace;color:#20232d;letter-spacing:0.000px;-webkit-text-stroke:0.3px #20232d;transform:translateY(0.10px) scaleX(0.9471);transform-origin:0 0;">okta</div>
<div id="r8u" class="t" style="left:752.7px;top:1017px;font:400 17.8px/23px 'Liberation Mono', monospace;color:#20232d;letter-spacing:0.000px;-webkit-text-stroke:0.3px #20232d;transform:translateY(0.10px) scaleX(0.9476);transform-origin:0 0;">Albert.Miller</div>
<div id="r8t" class="t" style="left:945.7px;top:1017px;font:400 17.8px/23px 'Liberation Mono', monospace;color:#20232d;letter-spacing:0.000px;-webkit-text-stroke:0.3px #20232d;transform:translateY(0.10px) scaleX(0.9493);transform-origin:0 0;">hr</div>
<div id="r8i" class="t" style="left:1123.5px;top:1017px;font:400 17.8px/23px 'Liberation Mono', monospace;color:#20232d;letter-spacing:0.000px;-webkit-text-stroke:0.3px #20232d;transform:translateY(0.10px) scaleX(0.9474);transform-origin:0 0;">250.254.204.97</div>
<div id="r8j" class="t" style="left:1473.3px;top:1017px;font:400 17.8px/23px 'Liberation Mono', monospace;color:#565b66;letter-spacing:0.000px;-webkit-text-stroke:0.3px #565b66;transform:translateY(0.10px) scaleX(0.9474);transform-origin:0 0;"><span class="p">{"</span><b>evt</b><span class="p">":{"</span><b>name</b><span class="p">":"</span>authentication<span class="p">","</span><b>outcome</b><span class="p">":"</span>succe…</div>
<div id="r9d" class="t" style="left:220.7px;top:1054px;font:400 17.8px/23px 'Liberation Mono', monospace;color:#20232d;letter-spacing:0.000px;-webkit-text-stroke:0.3px #20232d;transform:translateY(0.30px) scaleX(0.9477);transform-origin:0 0;">May 23 14:38:11.954</div>
<div id="r9s" class="t" style="left:506.7px;top:1054px;font:400 17.8px/23px 'Liberation Mono', monospace;color:#20232d;letter-spacing:0.000px;-webkit-text-stroke:0.3px #20232d;transform:translateY(0.30px) scaleX(0.9471);transform-origin:0 0;">okta</div>
<div id="r9u" class="t" style="left:752.7px;top:1054px;font:400 17.8px/23px 'Liberation Mono', monospace;color:#20232d;letter-spacing:0.000px;-webkit-text-stroke:0.3px #20232d;transform:translateY(0.30px) scaleX(0.9476);transform-origin:0 0;">Bradley.Jones</div>
<div id="r9t" class="t" style="left:945.7px;top:1054px;font:400 17.8px/23px 'Liberation Mono', monospace;color:#20232d;letter-spacing:0.000px;-webkit-text-stroke:0.3px #20232d;transform:translateY(0.30px) scaleX(0.9474);transform-origin:0 0;">finance</div>
<div id="r9i" class="t" style="left:1123.5px;top:1054px;font:400 17.8px/23px 'Liberation Mono', monospace;color:#20232d;letter-spacing:0.000px;-webkit-text-stroke:0.3px #20232d;transform:translateY(0.30px) scaleX(0.9474);transform-origin:0 0;">139.130.36.148</div>
<div id="r9c" class="t" style="left:1305.5px;top:1054px;font:400 17.8px/23px 'Liberation Mono', monospace;color:#20232d;letter-spacing:0.000px;-webkit-text-stroke:0.3px #20232d;transform:translateY(0.30px) scaleX(0.9478);transform-origin:0 0;">Australia</div>
<div id="r9j" class="t" style="left:1473.3px;top:1054px;font:400 17.8px/23px 'Liberation Mono', monospace;color:#565b66;letter-spacing:0.000px;-webkit-text-stroke:0.3px #565b66;transform:translateY(0.30px) scaleX(0.9474);transform-origin:0 0;"><span class="p">{"</span><b>evt</b><span class="p">":{"</span><b>name</b><span class="p">":"</span>authentication<span class="p">","</span><b>outcome</b><span class="p">":"</span>succe…</div>
<div id="r10d" class="t" style="left:220.7px;top:1091px;font:400 17.8px/23px 'Liberation Mono', monospace;color:#20232d;letter-spacing:0.000px;-webkit-text-stroke:0.3px #20232d;transform:translateY(0.50px) scaleX(0.9477);transform-origin:0 0;">May 23 14:38:11.672</div>
<div id="r10s" class="t" style="left:506.7px;top:1091px;font:400 17.8px/23px 'Liberation Mono', monospace;color:#20232d;letter-spacing:0.000px;-webkit-text-stroke:0.3px #20232d;transform:translateY(0.50px) scaleX(0.9471);transform-origin:0 0;">okta</div>
<div id="r10u" class="t" style="left:752.7px;top:1091px;font:400 17.8px/23px 'Liberation Mono', monospace;color:#20232d;letter-spacing:0.000px;-webkit-text-stroke:0.3px #20232d;transform:translateY(0.50px) scaleX(0.9474);transform-origin:0 0;">Tyler.Williams</div>
<div id="r10t" class="t" style="left:945.7px;top:1091px;font:400 17.8px/23px 'Liberation Mono', monospace;color:#20232d;letter-spacing:0.000px;-webkit-text-stroke:0.3px #20232d;transform:translateY(0.50px) scaleX(0.9493);transform-origin:0 0;">hr</div>
<div id="r10i" class="t" style="left:1123.5px;top:1091px;font:400 17.8px/23px 'Liberation Mono', monospace;color:#20232d;letter-spacing:0.000px;-webkit-text-stroke:0.3px #20232d;transform:translateY(0.50px) scaleX(0.9474);transform-origin:0 0;">71.189.204.173</div>
<div id="r10c" class="t" style="left:1305.5px;top:1091px;font:400 17.8px/23px 'Liberation Mono', monospace;color:#20232d;letter-spacing:0.000px;-webkit-text-stroke:0.3px #20232d;transform:translateY(0.50px) scaleX(0.9478);transform-origin:0 0;">Turkey</div>
<div id="r10j" class="t" style="left:1473.3px;top:1091px;font:400 17.8px/23px 'Liberation Mono', monospace;color:#565b66;letter-spacing:0.000px;-webkit-text-stroke:0.3px #565b66;transform:translateY(0.50px) scaleX(0.9474);transform-origin:0 0;"><span class="p">{"</span><b>evt</b><span class="p">":{"</span><b>name</b><span class="p">":"</span>authentication<span class="p">","</span><b>outcome</b><span class="p">":"</span>succe…</div>
<svg style="left:0;top:0" width="67" height="1096" viewBox="0 0 67 1096"><circle cx="29.1" cy="124.8" r="7.5" fill="none" stroke="#bcbcc1" stroke-linecap="round" stroke-linejoin="round" stroke-width="1.9"/><path d="M34.6 130.4L39.9 135.8" fill="none" stroke="#bcbcc1" stroke-linecap="round" stroke-linejoin="round" stroke-width="2.1"/><path d="M23.42 173.65A9.1 9.1 0 1 1 23.42 182.75" fill="none" stroke="#bcbcc1" stroke-linecap="round" stroke-linejoin="round" stroke-width="1.9"/><path d="M22.4 167.6V173.4H28.2" fill="none" stroke="#bcbcc1" stroke-linecap="round" stroke-linejoin="round" stroke-width="1.9" stroke-linecap="butt"/><path d="M30.8 171.8V179.4H26.8" fill="none" stroke="#bcbcc1" stroke-linecap="round" stroke-linejoin="round" stroke-width="1.9" stroke-linecap="butt" stroke-linejoin="miter"/><path d="M19.4 207.6V224.2H42" fill="none" stroke="#bcbcc1" stroke-linecap="round" stroke-linejoin="round" stroke-width="1.9" stroke-linecap="butt" stroke-linejoin="miter"/><path d="M22.4 221V213.2L27.7 208.2L33.2 214.7L37.7 211.3L40.4 221Z" fill="#bcbcc1"/><path d="M28.95 244.54A9.8 9.8 0 0 0 21.31 249.40" fill="none" stroke="#bcbcc1" stroke-linecap="round" stroke-linejoin="round" stroke-width="1.8"/><circle cx="20.200000000000003" cy="254.5" r="1.1" fill="#bcbcc1"/><path d="M21.15 258.90A9.8 9.8 0 0 0 39.50 252.94" fill="none" stroke="#bcbcc1" stroke-linecap="round" stroke-linejoin="round" stroke-width="1.8"/><path d="M31.33 248.60A5.9 5.9 0 1 0 35.15 256.79" fill="none" stroke="#bcbcc1" stroke-linecap="round" stroke-linejoin="round" stroke-width="1.8"/><circle cx="29.8" cy="254.3" r="2.0" fill="none" stroke="#bcbcc1" stroke-linecap="round" stroke-linejoin="round" stroke-width="1.7"/><path d="M31.400000000000002 252.5L39.3 242.6" fill="none" stroke="#bcbcc1" stroke-linecap="round" stroke-linejoin="round" stroke-width="2.2"/><path d="M23.4 285.6H28.5V302.3H19.2V296.8Z" fill="#bcbcc1"/><rect x="24" y="281.5" width="4.5" height="3.1" fill="#bcbcc1"/><path d="M37.3 285.6H32.2V302.3H41.5V296.8Z" fill="#bcbcc1"/><rect x="32.2" y="281.5" width="4.5" height="3.1" fill="#bcbcc1"/><rect x="28.5" y="286.6" width="3.7" height="6.8" fill="#bcbcc1"/><path d="M29.6 329.2L39.4 324.2V335.3L29.6 339.9Z" fill="none" stroke="#bcbcc1" stroke-linecap="round" stroke-linejoin="round" stroke-width="1.8" stroke-linejoin="miter"/><path d="M25.4 337.4V326.2L35.2 321.5" fill="none" stroke="#bcbcc1" stroke-linecap="round" stroke-linejoin="round" stroke-width="1.8" stroke-linejoin="miter" stroke-linecap="butt"/><path d="M21.3 334.8V324L30.8 319.7" fill="none" stroke="#bcbcc1" stroke-linecap="round" stroke-linejoin="round" stroke-width="1.8" stroke-linejoin="miter" stroke-linecap="butt"/><path d="M33 357.6L22.4 369.6H29.2L27.4 378L38.4 365.6H31.4Z" fill="#bcbcc1" stroke="#bcbcc1" stroke-width="0.8" stroke-linejoin="round"/><polygon points="23.70,409.00 29.07,412.10 29.07,418.30 23.70,421.40 18.33,418.30 18.33,412.10" fill="#bcbcc1"/><polygon points="36.90,409.70 41.49,412.35 41.49,417.65 36.90,420.30 32.31,417.65 32.31,412.35" fill="none" stroke="#bcbcc1" stroke-linecap="round" stroke-linejoin="round" stroke-width="1.8"/><polygon points="30.20,420.10 35.57,423.20 35.57,429.40 30.20,432.50 24.83,429.40 24.83,423.20" fill="#bcbcc1"/><path d="M25.6 466.6H24.6A5.6 5.6 0 0 1 23.6 455.5A6.9 6.9 0 0 1 36.8 455A5.9 5.9 0 0 1 36.2 466.6H34.4" fill="none" stroke="#bcbcc1" stroke-linecap="round" stroke-linejoin="round" stroke-width="1.8"/><path d="M32.8 457.6C32.4 456.2 31.4 455.6 30 455.6C28.4 455.6 27.2 456.4 27.2 457.8C27.2 460.8 32.9 459.4 32.9 462.6C32.9 464 31.6 464.8 30 464.8C28.4 464.8 27.3 464 27 462.6" fill="none" stroke="#bcbcc1" stroke-linecap="round" stroke-linejoin="round" stroke-width="1.6"/><path d="M30 453.4v2M30 465v3.2" fill="none" stroke="#bcbcc1" stroke-linecap="round" stroke-linejoin="round" stroke-width="1.5"/><rect x="18.4" y="486.2" width="23.6" height="2.4" fill="#bcbcc1"/><rect x="18.4" y="491.9" width="4.4" height="2.4" fill="#bcbcc1"/><rect x="26.3" y="491.9" width="15.7" height="2.4" fill="#bcbcc1"/><rect x="26.3" y="497.5" width="7.5" height="2.4" fill="#bcbcc1"/><rect x="37.4" y="497.5" width="4.6" height="2.4" fill="#bcbcc1"/><rect x="30" y="503.1" width="4.5" height="2.4" fill="#bcbcc1"/><path d="M24.8 527V524.2H40.6V536.6H34.6" fill="none" stroke="#bcbcc1" stroke-linecap="round" stroke-linejoin="round" stroke-width="1.8" stroke-linecap="butt" stroke-linejoin="miter"/><path d="M22.4 533.2V530.4H32.1V541.8H27.6" fill="none" stroke="#bcbcc1" stroke-linecap="round" stroke-linejoin="round" stroke-width="1.8" stroke-linecap="butt" stroke-linejoin="miter"/><rect x="19.6" y="535.2" width="5.6" height="8.8" fill="none" stroke="#bcbcc1" stroke-linecap="round" stroke-linejoin="round" stroke-width="1.8" stroke-linejoin="miter"/><path d="M31.2 567.2A5.2 5.2 0 1 0 26 572H35.4A5.1 5.1 0 1 1 30.6 578.8" fill="none" stroke="#bcbcc1" stroke-linecap="round" stroke-linejoin="round" stroke-width="1.9"/><path d="M33.4 577.8H28.8V582.2" fill="none" stroke="#bcbcc1" stroke-linecap="round" stroke-linejoin="round" stroke-width="1.8" stroke-linejoin="miter"/><path d="M30.2 601.6L38.8 604.8V610.6C38.8 615.4 35.2 618.4 30.2 620.2C25.2 618.4 21.6 615.4 21.6 610.6V604.8Z" fill="none" stroke="#bcbcc1" stroke-linecap="round" stroke-linejoin="round" stroke-width="1.7"/><path d="M30.2 601.6V620M22 605.8L30 609.8M22 610.4L30 614.4M23.8 615L30 618.2" fill="none" stroke="#bcbcc1" stroke-linecap="round" stroke-linejoin="round" stroke-width="1.5"/><path d="M29.12 638.77A8.9 8.9 0 1 0 39.01 648.84" fill="none" stroke="#bcbcc1" stroke-linecap="round" stroke-linejoin="round" stroke-width="1.8"/><polygon points="35.40,637.70 36.53,641.37 40.20,642.50 36.53,643.63 35.40,647.30 34.27,643.63 30.60,642.50 34.27,641.37" fill="#bcbcc1"/><polygon points="29.60,645.00 30.31,647.29 32.60,648.00 30.31,648.71 29.60,651.00 28.89,648.71 26.60,648.00 28.89,647.29" fill="#bcbcc1"/><path d="M25 698.5C25 694.5 27.2 693.2 29.9 693.2C32.6 693.2 34.8 694.5 34.8 698.5V703C34.8 706.8 32.8 709 29.9 709C27 709 25 706.8 25 703Z" fill="none" stroke="#bcbcc1" stroke-linecap="round" stroke-linejoin="round" stroke-width="1.7"/><path d="M25 697.4L29.9 700.2L34.8 697.4M29.9 700.2V708.6" fill="none" stroke="#bcbcc1" stroke-linecap="round" stroke-linejoin="round" stroke-width="1.5"/><path d="M19.4 691.4L25.4 696.2M40.4 691.4L34.4 696.2M18.8 701.2H25M41 701.2H34.8M19.4 710L25.4 705.2M40.4 710L34.4 705.2M27.2 689v4M32.6 689v4" fill="none" stroke="#bcbcc1" stroke-linecap="round" stroke-linejoin="round" stroke-width="1.6"/><path d="M19.77 744.60A10.8 10.8 0 0 1 33.54 731.53" fill="none" stroke="#bcbcc1" stroke-linecap="round" stroke-linejoin="round" stroke-width="2.3" stroke-dasharray="0.1 3.9"/><path d="M34.2 730L28.6 741.4A1.9 1.9 0 0 0 31.8 743.2Z" fill="#bcbcc1"/><path d="M37 733.4C40 736.4 41.4 741 40 746.4L37.2 745.6C38.2 741.6 37.2 738.2 35.4 735.8Z" fill="#bcbcc1"/><rect x="18.8" y="764.6" width="4" height="2.3" fill="#ffffff"/><rect x="24.2" y="764.6" width="4" height="2.3" fill="#ffffff"/><rect x="29.6" y="764.6" width="4" height="2.3" fill="#ffffff"/><rect x="35" y="764.6" width="2.6" height="2.3" fill="#ffffff"/><rect x="18.8" y="770.2" width="8.4" height="2.3" fill="#ffffff"/><rect x="18.8" y="775.8" width="6.2" height="2.3" fill="#ffffff"/><rect x="18.8" y="781.4" width="4.6" height="2.3" fill="#ffffff"/><circle cx="33.8" cy="777" r="6.2" fill="none" stroke="#ffffff" stroke-width="2.1"/><path d="M29.2 781.6L23.6 787" fill="none" stroke="#ffffff" stroke-width="2.4" stroke-linecap="round"/><ellipse cx="33.6" cy="776.4" rx="2.2" ry="1.5" fill="#ffffff"/><path d="M19 906.4H25.4C24 903.6 25.4 901 27.6 901C29.8 901 31.2 903.6 29.8 906.4H36.2V911.6C38.8 910.2 41.6 911.4 41.6 913.8C41.6 916.2 38.8 917.4 36.2 916V921H30.6C31.8 918.4 30.2 916.6 27.7 916.6C25.2 916.6 23.6 918.4 24.8 921H19Z" fill="#bcbcc1"/><polygon points="32.90,938.70 35.09,944.31 40.70,946.50 35.09,948.69 32.90,954.30 30.71,948.69 25.10,946.50 30.71,944.31" fill="#bcbcc1"/><polygon points="24.90,949.90 26.24,953.16 29.50,954.50 26.24,955.84 24.90,959.10 23.56,955.84 20.30,954.50 23.56,953.16" fill="#bcbcc1"/><circle cx="30.9" cy="993.9" r="14.1" fill="#21194a"/><rect x="21.8" y="981.9" width="2.8" height="2.6" fill="#d0938a"/><rect x="36.2" y="981.9" width="2.8" height="2.6" fill="#d0938a"/><rect x="24.6" y="985.4" width="2.7" height="9.6" fill="#d0938a"/><rect x="33.2" y="985.4" width="2.7" height="9.6" fill="#d0938a"/><rect x="27.3" y="987.9" width="5.9" height="3.1" fill="#d0938a"/><rect x="27.3" y="993.6" width="5.9" height="1.4" fill="#d0938a"/><rect x="18.4" y="994.6" width="23.6" height="6.8" fill="#d0938a"/><rect x="21.7" y="1001.4" width="3.1" height="3.5" fill="#d0938a"/><rect x="35.9" y="1001.4" width="3.1" height="3.5" fill="#d0938a"/><circle cx="26.2" cy="997.6" r="1.35" fill="#21194a"/><circle cx="34.4" cy="997.6" r="1.35" fill="#21194a"/><path d="M21.6 994.4h3v2.2l-3 -1.2zM40.2 994.4h-3.6v2.2l3.6 -1.2z" fill="#21194a"/><path d="M24.6 1047.6C24.8 1044.2 27.6 1042.6 31 1042.6C34.6 1042.6 37.2 1044.6 37.2 1047.4C37.2 1051.6 31.6 1051.4 31.6 1055.6" fill="none" stroke="#c0c1c9" stroke-width="1.8" stroke-linecap="round"/><circle cx="31.6" cy="1058.8" r="1.35" fill="#c0c1c9"/></svg>
<div class="sd" style="top:151px"></div><div class="sd" style="top:393px"></div><div class="sd" style="top:673px"></div><svg style="left:1250px;top:620px" width="24" height="34" viewBox="1250 620 24 34"><path d="M1255.6 626.9V644.6L1259.3 641.2L1262.5 648.4L1265.6 647.1L1262.5 640.1L1267.6 639.8Z" fill="#000" stroke="#fff" stroke-width="2.4" stroke-linejoin="miter" paint-order="stroke fill"/></svg>
<div class="a" id="helpline"></div>
<div class="a" id="botline"></div>
</div>
</body></html>
